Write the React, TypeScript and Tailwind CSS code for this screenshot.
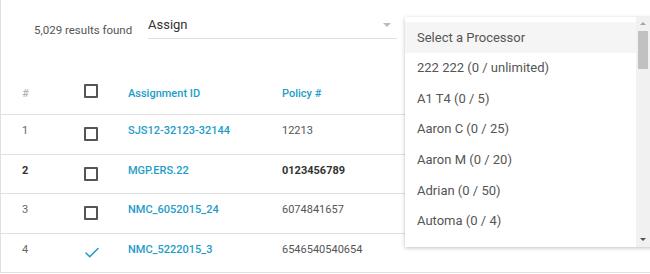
import { FiCheck } from 'react-icons/fi';

interface Row {
    num: number;
    id: string;
    policy: string;
    checked?: boolean;
    bold?: boolean;
    h: string;
}

const ROWS: Row[] = [
    { num: 1, id: 'SJS12-32123-32144', policy: '12213', h: 'h-[40px]' },
    { num: 2, id: 'MGP.ERS.22', policy: '0123456789', bold: true, h: 'h-[39px]' },
    { num: 3, id: 'NMC_6052015_24', policy: '6074841657', h: 'h-[40px]' },
    { num: 4, id: 'NMC_5222015_3', policy: '6546540540654', checked: true, h: 'h-[39px]' },
];

const PROCESSORS = [
    'Select a Processor',
    '222 222 (0 / unlimited)',
    'A1 T4 (0 / 5)',
    'Aaron C (0 / 25)',
    'Aaron M (0 / 20)',
    'Adrian (0 / 50)',
    'Automa (0 / 4)',
];

function Box() {
    return <div className="w-[14px] h-[14px] border-2 border-[#555] rounded-[1px]" />;
}

export default function App() {
    return (
        <div className="relative w-[650px] h-[274px] bg-white overflow-hidden font-['Roboto',sans-serif]">
            <div className="border-l border-b border-[#e0e0e0] h-[273px]">
                {/* Toolbar */}
                <div className="h-[74px] flex items-start pt-[17px]">
                    <span className="ml-[33px] w-[114px] mt-[5px] text-[11.5px] text-[#555]">5,029 results found</span>
                    <div className="w-[249px] h-[22px] border-b border-[#e0e0e0] flex items-start justify-between">
                        <span className="text-[13px] text-[#333] leading-[16px]">Assign</span>
                        <span className="mt-[6px] mr-[6px] w-0 h-0 border-l-[4px] border-r-[4px] border-t-[4px] border-l-transparent border-r-transparent border-t-[#bbb]" />
                    </div>
                </div>

                {/* Header */}
                <div className="h-[41px] border-b border-[#e0e0e0] flex items-center text-[11px]">
                    <span className="w-[83px] pl-[21px] text-[#aaa]">#</span>
                    <div className="w-[44px] pb-[7px]"><Box /></div>
                    <span className="w-[154px] text-[#1d9dc8] font-medium">Assignment ID</span>
                    <span className="text-[#1d9dc8] font-medium">Policy #</span>
                </div>

                {ROWS.map((r, i) => (
                    <div
                        key={r.num}
                        className={`${r.h} ${i < ROWS.length - 1 ? 'border-b' : ''} border-[#e0e0e0] flex items-center text-[11px]`}
                    >
                        <span className={`w-[83px] pl-[21px] pb-[6px] ${r.bold ? 'font-bold text-[#333]' : 'text-[#666]'}`}>{r.num}</span>
                        <div className="w-[44px] pb-[1px]">
                            {r.checked ? <FiCheck size={18} className="text-[#1d9dc8] -ml-[1px]" strokeWidth={2} /> : <Box />}
                        </div>
                        <span className="w-[154px] pb-[6px] text-[#1d9dc8] font-medium">{r.id}</span>
                        <span className={`pb-[6px] ${r.bold ? 'font-bold text-[#333]' : 'text-[#555]'}`}>{r.policy}</span>
                    </div>
                ))}
            </div>

            {/* Processor dropdown */}
            <div className="absolute left-[405px] top-[17px] w-[250px] h-[230px] bg-white shadow-[0_1px_4px_rgba(0,0,0,0.25)] flex overflow-hidden">
                <div className="flex-1 pt-[5px]">
                    {PROCESSORS.map((p, i) => (
                        <div
                            key={p}
                            className={`h-[30.6px] flex items-center pl-[12px] text-[13px] text-[#555] ${i === 0 ? 'bg-[#f5f5f5]' : ''}`}
                        >
                            {p}
                        </div>
                    ))}
                </div>
                <div className="w-[14px] mr-[5px] bg-[#f1f1f1] flex flex-col items-center">
                    <span className="mt-[5px] w-0 h-0 border-l-[3px] border-r-[3px] border-b-[3px] border-l-transparent border-r-transparent border-b-[#a3a3a3]" />
                    <div className="mt-[6px] w-[10px] h-[38px] bg-[#c1c1c1]" />
                    <div className="flex-1" />
                    <span className="mb-[6px] w-0 h-0 border-l-[3px] border-r-[3px] border-t-[3px] border-l-transparent border-r-transparent border-t-[#505050]" />
                </div>
            </div>
        </div>
    );
}
